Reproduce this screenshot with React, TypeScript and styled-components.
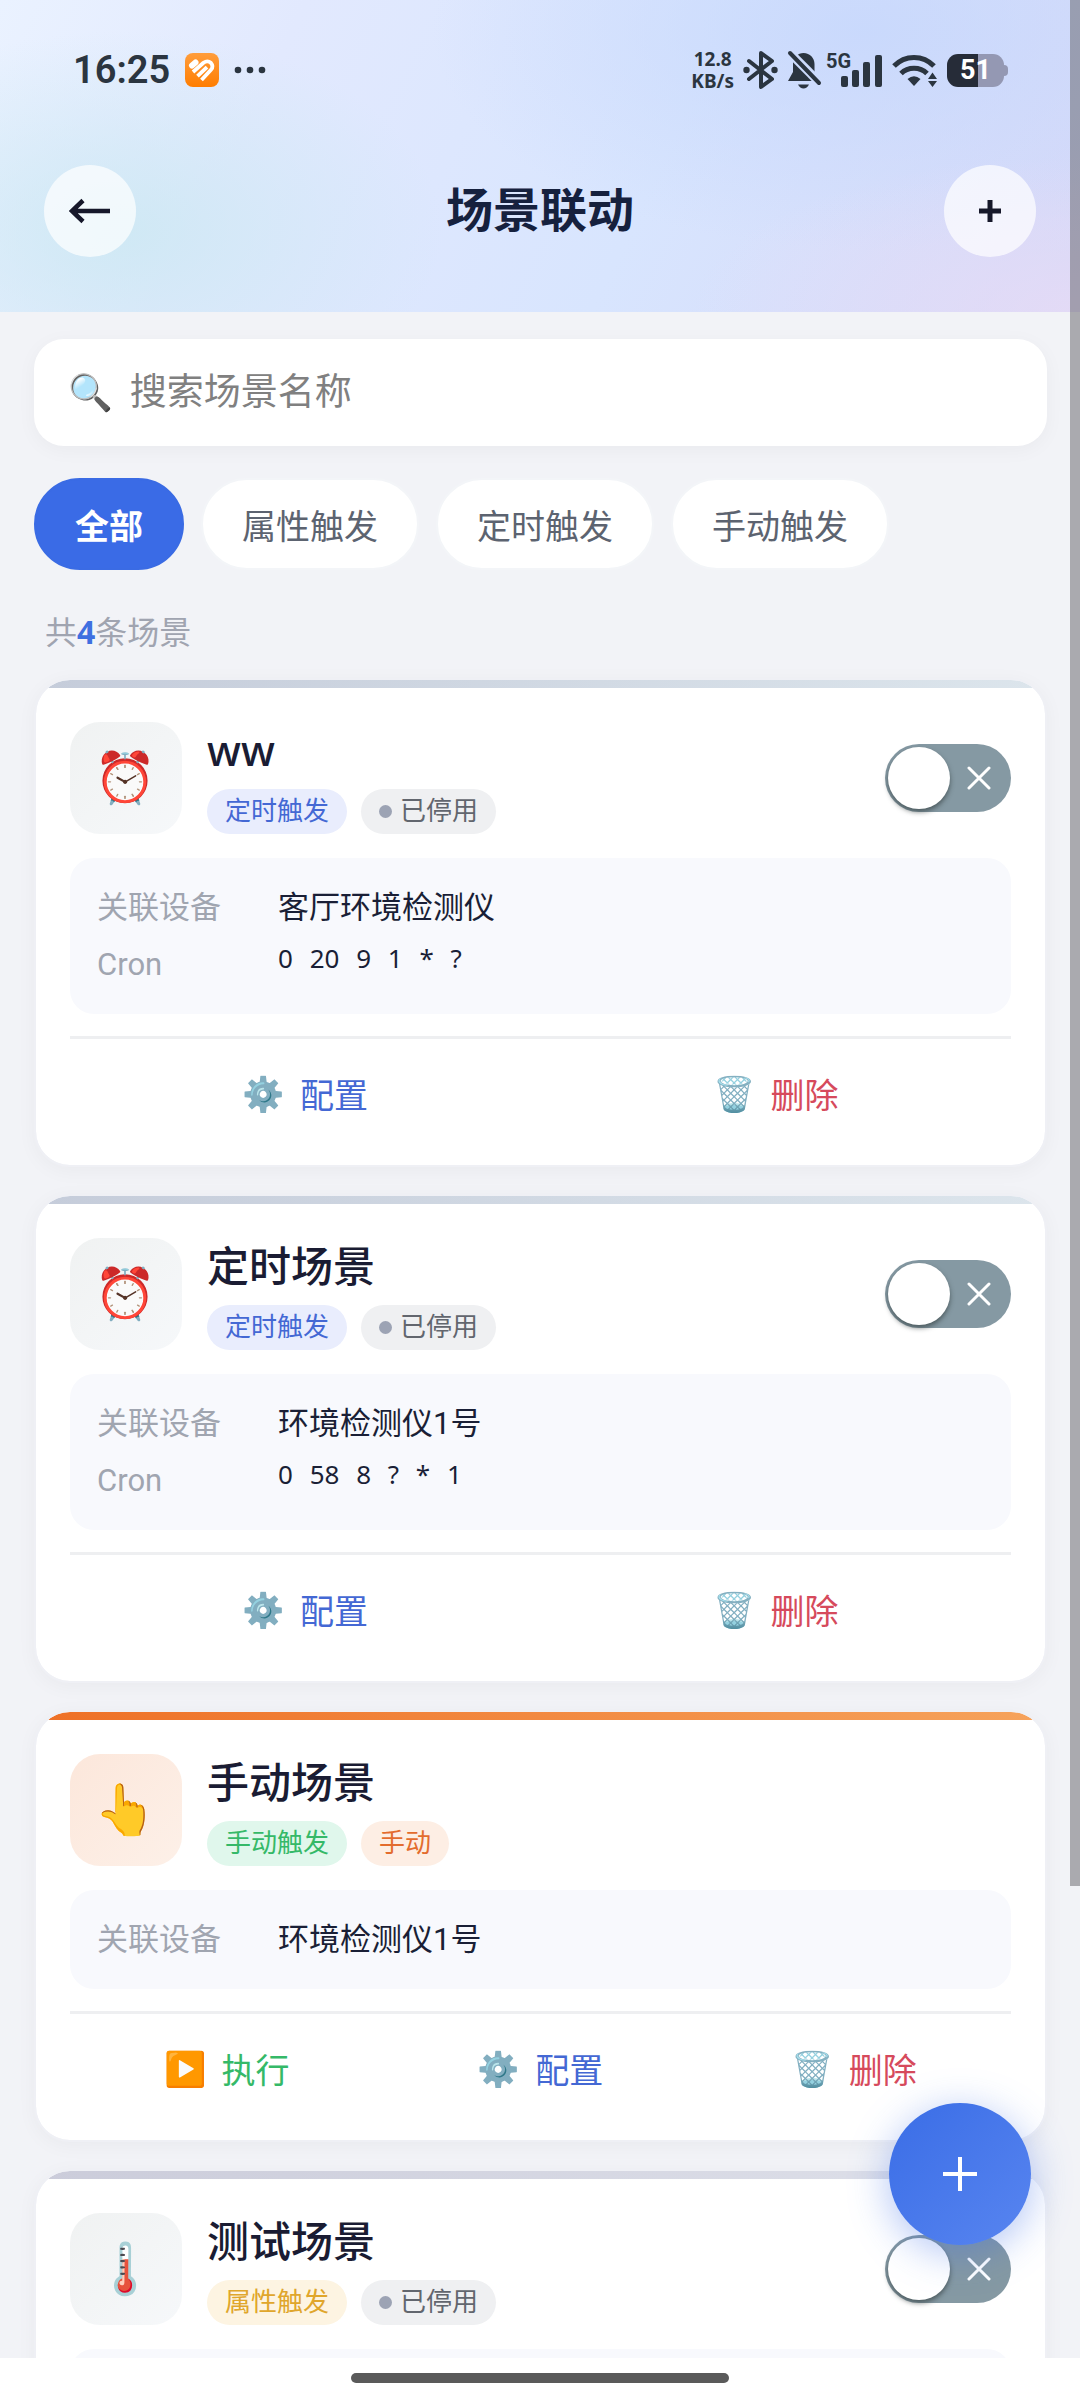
import React, { useState } from "react";
import styled, { createGlobalStyle } from "styled-components";

const latin = `Roboto, "Noto Sans CJK SC", "Noto Color Emoji", sans-serif`;
const display = `"Noto Sans", "Noto Sans CJK SC", "Noto Color Emoji", sans-serif`;

const GlobalStyle = createGlobalStyle`
  *, *::before, *::after { box-sizing: border-box; }
  html, body, #root { height: 100%; }
  body { margin: 0; background: #fff; font-family: ${latin}; color: #1a1f36; }
  button, input { font: inherit; }
  button { border: 0; padding: 0; background: none; cursor: pointer; color: inherit; }
`;

const Screen = styled.div`
  display: flex;
  flex-direction: column;
  height: 100vh;
`;

const Viewport = styled.main`
  position: relative;
  flex: 1;
  min-height: 0;
  background: #f2f3f7;
`;

const Scroller = styled.div`
  height: 100%;
  overflow-y: auto;
  scrollbar-width: none;
`;

const ScrollThumb = styled.div`
  position: absolute;
  top: 0;
  right: 0;
  width: 10px;
  height: 80%;
  background: rgba(98, 98, 104, 0.5);
`;

const Header = styled.header`
  height: 312px;
  background:
    radial-gradient(ellipse 30% 64% at 11% 74%, rgba(202, 232, 242, 0.8), rgba(202, 232, 242, 0)),
    radial-gradient(ellipse 36% 50% at 100% 100%, rgba(232, 219, 245, 0.75), rgba(232, 219, 245, 0)),
    radial-gradient(ellipse 40% 70% at 80% 10%, rgba(198, 215, 252, 0.8), rgba(198, 215, 252, 0)),
    linear-gradient(115deg, #eaf2ff 0%, #e2e9fe 25%, #d8e5fe 60%, #d5d8f8 100%);
`;

const StatusBar = styled.div`
  display: flex;
  align-items: center;
  justify-content: space-between;
  height: 140px;
  padding: 0 72px 0 73px;
  color: #2b3540;
`;

const StatusGroup = styled.div<{ $gap: number }>`
  display: flex;
  align-items: center;
  gap: ${(p) => p.$gap}px;
`;

const Clock = styled.time`
  font-size: 38px;
  line-height: 44px;
  font-weight: 600;
`;

const NetSpeed = styled.div`
  font-family: ${display};
  font-size: 19px;
  line-height: 22px;
  font-weight: 700;
  text-align: center;
`;

const Battery = styled.div`
  position: relative;
  display: flex;
  align-items: center;
  justify-content: center;
  width: 57px;
  height: 33px;
  margin-right: 4px;
  border-radius: 11px;
  background: linear-gradient(90deg, #262c38 0 31px, #9498b3 31px);
  color: #fff;
  font-size: 27px;
  line-height: 33px;
  font-weight: 700;
  &::after {
    content: "";
    position: absolute;
    left: 100%;
    top: 11px;
    width: 4px;
    height: 11px;
    border-radius: 0 4px 4px 0;
    background: #9498b3;
  }
`;

const NavBar = styled.div`
  display: flex;
  align-items: center;
  justify-content: space-between;
  padding: 25px 44px 0;
`;

const RoundButton = styled.button`
  display: grid;
  place-items: center;
  width: 92px;
  height: 92px;
  border-radius: 50%;
  background: rgba(255, 255, 255, 0.7);
  color: #1a1f36;
`;

const PageTitle = styled.h1`
  margin: 0;
  font-size: 47px;
  line-height: 64px;
  font-weight: 700;
  color: #16213e;
`;

const Content = styled.div`
  padding: 27px 33px 26px 34px;
`;

const SearchBox = styled.label`
  display: flex;
  align-items: center;
  gap: 17px;
  height: 107px;
  padding: 0 34px;
  border-radius: 30px;
  background: #fff;
  box-shadow: 0 4px 20px rgba(0, 0, 0, 0.04);
  font-size: 36px;
`;

const SearchInput = styled.input`
  flex: 1;
  min-width: 0;
  border: 0;
  padding: 0;
  outline: 0;
  background: none;
  font-size: 37px;
  line-height: 54px;
  &::placeholder { color: #808080; opacity: 1; }
`;

const Chips = styled.div`
  display: flex;
  gap: 17px;
  margin-top: 32px;
`;

const Chip = styled.button<{ $active: boolean }>`
  height: 92px;
  padding: 0 39px;
  border: 2px solid ${(p) => (p.$active ? "#3a6be4" : "#f3f5f8")};
  border-radius: 46px;
  background: ${(p) => (p.$active ? "#3a6be6" : "#fff")};
  color: ${(p) => (p.$active ? "#fff" : "#5c6370")};
  font-size: 34px;
  font-weight: ${(p) => (p.$active ? 700 : 400)};
  white-space: nowrap;
`;

const Count = styled.p`
  margin: 40px 0 22px;
  padding: 0 11px;
  font-size: 32px;
  line-height: 46px;
  color: #a0a4b0;
`;

const CountNumber = styled.strong`
  font-family: ${display};
  line-height: 1;
  color: #3f6fe0;
`;

const CardList = styled.div`
  display: grid;
  gap: 27px;
`;

const Card = styled.article<{ $stripe: string }>`
  overflow: hidden;
  border: 2px solid #eff0f5;
  border-radius: 36px;
  padding: 42px 34px 34px;
  background: ${(p) => p.$stripe} top / 100% 8px no-repeat #fff;
  background-origin: padding-box;
  background-clip: padding-box;
  box-shadow: 0 4px 20px rgba(0, 0, 0, 0.04);
`;

const CardHead = styled.div`
  display: flex;
  align-items: center;
  gap: 25px;
`;

const IconTile = styled.div<{ $tint: string }>`
  display: grid;
  place-items: center;
  flex: none;
  width: 112px;
  height: 112px;
  border-radius: 30px;
  background: ${(p) => p.$tint};
  font-size: 50px;
  line-height: 1;
`;

const CardInfo = styled.div`
  flex: 1;
  min-width: 0;
`;

const CardTitle = styled.h2`
  margin: 0;
  font-family: ${display};
  font-size: 42px;
  line-height: 55px;
  font-weight: 500;
  color: #1a1c33;
`;

const Tags = styled.div`
  display: flex;
  gap: 14px;
  margin-top: 12px;
`;

const Tag = styled.span<{ $bg: string; $fg: string }>`
  display: flex;
  align-items: center;
  gap: 8px;
  height: 45px;
  padding: 0 18px;
  border-radius: 23px;
  background: ${(p) => p.$bg};
  color: ${(p) => p.$fg};
  font-size: 26px;
  line-height: 45px;
`;

const Dot = styled.i`
  width: 13px;
  height: 13px;
  border-radius: 50%;
  background: #9ca3b4;
`;

const Toggle = styled.label<{ $on: boolean }>`
  position: relative;
  display: flex;
  flex-direction: ${(p) => (p.$on ? "row-reverse" : "row")};
  align-items: center;
  width: 126px;
  height: 68px;
  padding: 3px;
  border-radius: 34px;
  background: ${(p) => (p.$on ? "#3a6be6" : "#8599a3")};
  cursor: pointer;
`;

const ToggleInput = styled.input`
  position: absolute;
  inset: 0;
  margin: 0;
  opacity: 0;
`;

const Knob = styled.span`
  width: 62px;
  height: 62px;
  border-radius: 50%;
  background: #fff;
  box-shadow: 0 3px 5px rgba(40, 50, 50, 0.6);
`;

const ToggleMark = styled.span`
  flex: 1;
  display: grid;
  place-items: center;
`;

const Details = styled.dl`
  display: grid;
  gap: 10px;
  margin: 24px 0 22px;
  padding: 26px 27px;
  border-radius: 24px;
  background: #f8f9fd;
  font-size: 31px;
  line-height: 47px;
`;

const DetailRow = styled.div`
  display: grid;
  grid-template-columns: 181px 1fr;
  height: 47px;
`;

const Term = styled.dt`
  color: #a0a5b0;
`;

const Value = styled.dd`
  margin: 0;
`;

const CronValue = styled(Value)`
  font-family: "Noto Sans", sans-serif;
  font-size: 26px;
  line-height: 34px;
`;

const CronField = styled.span`
  margin-right: 10px;
`;

const Actions = styled.div`
  display: flex;
  padding-top: 17px;
  border-top: 3px solid #eeeff1;
`;

const Action = styled.button<{ $fg: string }>`
  flex: 1;
  display: flex;
  align-items: center;
  justify-content: center;
  gap: 15px;
  height: 75px;
  color: ${(p) => p.$fg};
  font-size: 34px;
`;

const Fab = styled.button`
  position: absolute;
  right: 49px;
  bottom: 113px;
  display: grid;
  place-items: center;
  width: 142px;
  height: 142px;
  border-radius: 50%;
  background: linear-gradient(135deg, #3a6de6, #5885f0);
  box-shadow: 0 8px 40px rgba(58, 107, 230, 0.4);
`;

const GestureBar = styled.footer`
  display: flex;
  justify-content: center;
  flex: none;
  height: 42px;
  padding-top: 15px;
  background: #fff;
`;

const GesturePill = styled.div`
  width: 35%;
  height: 10px;
  border-radius: 5px;
  background: #5a5a5a;
`;

const SignalSvg = styled.svg`
  overflow: visible;
`;

const AppBadge = () => (
  <svg width="34" height="34" viewBox="0 0 34 34" aria-hidden="true">
    <defs>
      <linearGradient id="badge" x1="0" y1="0" x2="0" y2="1">
        <stop offset="0" stopColor="#ff9d3c" />
        <stop offset="1" stopColor="#ff7d00" />
      </linearGradient>
    </defs>
    <rect width="34" height="34" rx="8" fill="url(#badge)" />
    <g fill="none" stroke="#fff" strokeLinejoin="round">
      <path d="M7 12.500 L10.500 9.500" strokeWidth="6" strokeLinecap="round" />
      <path d="M8 19 L18.500 9.800 Q22.500 7 25.800 9.800 Q29 13.500 26 16.800 L16.500 27" strokeWidth="3.800" />
      <path d="M12.500 23.200 L22 14.200" strokeWidth="3.800" />
    </g>
  </svg>
);

const MoreDots = () => (
  <svg width="32" height="8" viewBox="0 0 32 8" fill="#2b3540" aria-hidden="true">
    <circle cx="4" cy="4" r="3.300" />
    <circle cx="16" cy="4" r="3.300" />
    <circle cx="28" cy="4" r="3.300" />
  </svg>
);

const BluetoothIcon = () => (
  <svg width="35" height="40" viewBox="0 0 35 40" aria-hidden="true">
    <path d="M6 11 L29 29 L18 37 V3 L29 11 L6 29" fill="none" stroke="#2b3540" strokeWidth="4" strokeLinejoin="round" strokeLinecap="round" />
    <circle cx="3.500" cy="20" r="3.200" fill="#2b3540" />
    <circle cx="31.500" cy="20" r="3.200" fill="#2b3540" />
  </svg>
);

const MutedBellIcon = () => (
  <svg width="35" height="40" viewBox="0 0 35 40" aria-hidden="true">
    <mask id="bellCut">
      <rect width="35" height="40" fill="#fff" />
      <path d="M-1 -1 L36 36" stroke="#000" strokeWidth="9" />
    </mask>
    <g fill="#2b3540" mask="url(#bellCut)">
      <path d="M1 31 L6 22 V14 C6 7 11 3 16.500 3 C23 3 27.500 8 27.500 14 V22 L33 31 Z" />
    </g>
    <path d="M11 34.500 H22 Q20 38.500 16.500 38.500 Q13 38.500 11 34.500 Z" fill="#2b3540" />
    <path d="M3 3 L32 33" stroke="#2b3540" strokeWidth="4" strokeLinecap="round" />
  </svg>
);

const SignalIcon = () => (
  <SignalSvg width="52" height="38" viewBox="5 0 52 38" fill="#2b3540" role="img" aria-label="5G">
    <text x="0" y="17" fontSize="20" fontWeight="700" fontFamily="Roboto, sans-serif">5G</text>
    <rect x="15" y="25" width="7" height="11" rx="2" />
    <rect x="26" y="19" width="7" height="17" rx="2" />
    <rect x="37" y="11" width="7" height="25" rx="2" />
    <rect x="49" y="4" width="7" height="32" rx="2" />
  </SignalSvg>
);

const WifiIcon = () => (
  <svg width="46" height="34" viewBox="0 0 46 34" aria-hidden="true">
    <g fill="none" stroke="#2b3540" strokeWidth="5">
      <path d="M2 13 C13 1.500 31 1.500 42 13" />
      <path d="M9 20.500 C16 13.500 28 13.500 35 20.500" />
    </g>
    <path d="M15.500 26 Q22 20.500 28.500 26 L22 33 Z" fill="#2b3540" />
    <path d="M36 26 L40.500 19.500 L45 26 Z M36 28 H45 L40.500 34 Z" fill="#2b3540" />
  </svg>
);

const BackIcon = () => (
  <svg width="42" height="26" viewBox="0 0 42 26" fill="none" stroke="#16182a" strokeWidth="4.500" aria-hidden="true">
    <path d="M41 13 H4 M14 2.500 L3 13 L14 23.500" />
  </svg>
);

const PlusIcon = ({ size, color, weight }: { size: number; color: string; weight: number }) => (
  <svg width={size} height={size} viewBox={`0 0 ${size} ${size}`} stroke={color} strokeWidth={weight} aria-hidden="true">
    <path d={`M0 ${size / 2} H${size} M${size / 2} 0 V${size}`} />
  </svg>
);

const CrossIcon = () => (
  <svg width="24" height="24" viewBox="0 0 24 24" stroke="#fff" strokeWidth="3" strokeLinecap="round" aria-hidden="true">
    <path d="M2 2 L22 22 M22 2 L2 22" />
  </svg>
);

type Kind = "timer" | "manual" | "property";

const kinds: Record<Kind, { label: string; icon: string; bg: string; fg: string }> = {
  timer: { label: "定时触发", icon: "⏰", bg: "#e9edfd", fg: "#4468d4" },
  manual: { label: "手动触发", icon: "👆", bg: "#e0f7ec", fg: "#35b968" },
  property: { label: "属性触发", icon: "🌡️", bg: "#fdf4e2", fg: "#e0a62c" },
};

interface Scene {
  name: string;
  kind: Kind;
  device: string;
  cron?: string;
}

const scenes: Scene[] = [
  { name: "ww", kind: "timer", device: "客厅环境检测仪", cron: "0 20 9 1 * ?" },
  { name: "定时场景", kind: "timer", device: "环境检测仪1号", cron: "0 58 8 ? * 1" },
  { name: "手动场景", kind: "manual", device: "环境检测仪1号" },
  { name: "测试场景", kind: "property", device: "环境检测仪1号" },
];

const filters = ["全部", "属性触发", "定时触发", "手动触发"];

function SceneCard({ scene }: { scene: Scene }) {
  const [enabled, setEnabled] = useState(false);
  const kind = kinds[scene.kind];
  const manual = scene.kind === "manual";
  return (
    <Card
      $stripe={
        manual
          ? "linear-gradient(90deg, #ee7026, #f6a35c)"
          : scene.kind === "timer"
            ? "linear-gradient(90deg, #c5ccda, #dce5ec)"
            : "linear-gradient(90deg, #cbccda, #dfe1ea)"
      }
    >
      <CardHead>
        <IconTile $tint={manual ? "linear-gradient(135deg, #fce7db, #fdf0e8)" : "linear-gradient(135deg, #f0f2f2, #f6f8fa)"}>
          {kind.icon}
        </IconTile>
        <CardInfo>
          <CardTitle>{scene.name}</CardTitle>
          <Tags>
            <Tag $bg={kind.bg} $fg={kind.fg}>{kind.label}</Tag>
            {manual ? (
              <Tag $bg="#fdeee4" $fg="#e36c2e">手动</Tag>
            ) : (
              <Tag $bg="#eff0f2" $fg="#62666e"><Dot />已停用</Tag>
            )}
          </Tags>
        </CardInfo>
        {!manual && (
          <Toggle $on={enabled}>
            <ToggleInput
              type="checkbox"
              aria-label={scene.name}
              checked={enabled}
              onChange={(e) => setEnabled(e.target.checked)}
            />
            <Knob />
            <ToggleMark>{!enabled && <CrossIcon />}</ToggleMark>
          </Toggle>
        )}
      </CardHead>
      <Details>
        <DetailRow>
          <Term>关联设备</Term>
          <Value>{scene.device}</Value>
        </DetailRow>
        {scene.cron && (
          <DetailRow>
            <Term>Cron</Term>
            <CronValue>
              {scene.cron.split(" ").map((field, i) => (
                <React.Fragment key={i}>
                  <CronField>{field}</CronField>{" "}
                </React.Fragment>
              ))}
            </CronValue>
          </DetailRow>
        )}
      </Details>
      <Actions>
        {manual && <Action $fg="#35b968"><span>▶️</span>执行</Action>}
        <Action $fg="#4468d4"><span>⚙️</span>配置</Action>
        <Action $fg="#d64a5c"><span>🗑️</span>删除</Action>
      </Actions>
    </Card>
  );
}

export default function App() {
  const [filter, setFilter] = useState(filters[0]);
  const shown = scenes.filter((s) => filter === filters[0] || kinds[s.kind].label === filter);
  return (
    <Screen>
      <GlobalStyle />
      <Viewport>
        <Scroller>
          <Header>
            <StatusBar>
              <StatusGroup $gap={15}>
                <Clock>16:25</Clock>
                <AppBadge />
                <MoreDots />
              </StatusGroup>
              <StatusGroup $gap={9}>
                <NetSpeed>12.8<br />KB/s</NetSpeed>
                <BluetoothIcon />
                <MutedBellIcon />
                <SignalIcon />
                <WifiIcon />
                <Battery>51</Battery>
              </StatusGroup>
            </StatusBar>
            <NavBar>
              <RoundButton aria-label="返回"><BackIcon /></RoundButton>
              <PageTitle>场景联动</PageTitle>
              <RoundButton aria-label="添加"><PlusIcon size={22} color="#16182a" weight={5} /></RoundButton>
            </NavBar>
          </Header>
          <Content>
            <SearchBox>
              <span>🔍</span>
              <SearchInput type="text" placeholder="搜索场景名称" aria-label="搜索场景名称" />
            </SearchBox>
            <Chips>
              {filters.map((f) => (
                <Chip key={f} $active={f === filter} onClick={() => setFilter(f)}>{f}</Chip>
              ))}
            </Chips>
            <Count>共<CountNumber>{shown.length}</CountNumber>条场景</Count>
            <CardList>
              {shown.map((s) => <SceneCard key={s.name} scene={s} />)}
            </CardList>
          </Content>
        </Scroller>
        <Fab aria-label="新建场景"><PlusIcon size={34} color="#fff" weight={4} /></Fab>
        <ScrollThumb />
      </Viewport>
      <GestureBar><GesturePill /></GestureBar>
    </Screen>
  );
}
